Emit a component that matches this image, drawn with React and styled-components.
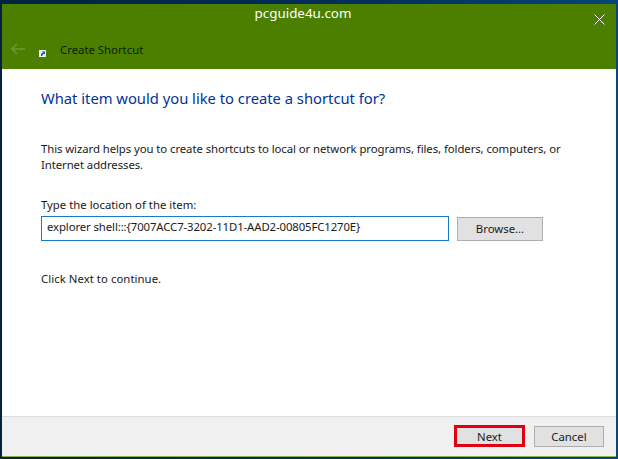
import React from 'react';
import styled, { createGlobalStyle } from 'styled-components';

const GlobalStyle = createGlobalStyle`
  html, body {
    margin: 0;
    padding: 0;
    background: #03254a;
  }
  * {
    box-sizing: border-box;
  }
`;

const Desktop = styled.div`
  width: 618px;
  height: 459px;
  padding: 4px 2px 2px 2px;
  background: linear-gradient(90deg, #04233f 0%, #03305c 60%, #06467a 100%);
  font-family: "Noto Sans", "Open Sans", sans-serif;
  font-size: 11.35px;
  color: #1a1a1a;
  overflow: hidden;
`;

const Wizard = styled.div`
  height: 100%;
  display: flex;
  flex-direction: column;
  background: #fff;
  border-bottom: 1px solid #8fb04e;
`;

const Header = styled.header`
  height: 65px;
  flex: none;
  background: #4c7f00;
  display: flex;
  flex-direction: column;
`;

const TitleBar = styled.div`
  position: relative;
  height: 32px;
  padding-right: 12px;
  text-align: center;
  color: #fff;
  font-size: 13.4px;
  line-height: 19px;
`;

const CloseIcon = styled.svg`
  position: absolute;
  top: 10px;
  right: 11px;
  width: 11px;
  height: 11px;
`;

const NavRow = styled.div`
  display: flex;
  align-items: center;
  height: 26px;
  padding-left: 9px;
`;

const BackIcon = styled.svg`
  width: 14px;
  height: 12px;
  flex: none;
`;

const ShortcutIcon = styled.svg`
  width: 7px;
  height: 7px;
  flex: none;
  margin: 8px 0 0 14px;
`;

const NavTitle = styled.span`
  margin-left: 14px;
  color: #0d1f00;
`;

const Body = styled.main`
  flex: 1;
  padding: 18px 39px 0;
`;

const Heading = styled.h1`
  margin: 0 0 32px;
  font-size: 14.75px;
  font-weight: 400;
  line-height: 22px;
  color: #003399;
`;

const Paragraph = styled.p`
  margin: 0 0 24px;
  width: 530px;
  line-height: 16px;
  letter-spacing: ${(p) => p.$spacing || 0}px;
`;

const FieldLabel = styled.label`
  display: block;
  margin-bottom: 3px;
  line-height: 16px;
`;

const FieldRow = styled.div`
  display: flex;
  align-items: center;
  gap: 8px;
  margin-bottom: 30px;
`;

const LocationInput = styled.div`
  width: 408px;
  height: 25px;
  padding-left: 5px;
  border: 1px solid #1979ca;
  line-height: 20px;
  letter-spacing: -0.1px;
  white-space: nowrap;
`;

const Button = styled.button`
  width: ${(p) => p.$width}px;
  height: ${(p) => p.$height}px;
  padding: 0;
  background: #e1e1e1;
  border: 1px solid #adadad;
  color: #1a1a1a;
  font-family: inherit;
  font-size: inherit;
`;

const Footer = styled.footer`
  height: 40px;
  flex: none;
  display: flex;
  align-items: center;
  justify-content: flex-end;
  gap: 9px;
  padding: 0 12px 1px 0;
  background: #f0f0f0;
  border-top: 1px solid #dfdfdf;
`;

const NextButton = styled(Button)`
  border: 3px solid #e00012;
`;

export default function App() {
  return (
    <>
      <GlobalStyle />
      <Desktop>
        <Wizard>
          <Header>
            <TitleBar>
              pcguide4u.com
              <CloseIcon viewBox="0 0 11 11">
                <path d="M0.5 0.5L10.5 10.5M10.5 0.5L0.5 10.5" stroke="#fff" strokeWidth="1" fill="none" />
              </CloseIcon>
            </TitleBar>
            <NavRow>
              <BackIcon viewBox="0 0 14 12">
                <path d="M1 6H14M6 1L1 6L6 11" stroke="#6d9635" strokeWidth="1.4" fill="none" />
              </BackIcon>
              <ShortcutIcon viewBox="0 0 7 7">
                <rect width="7" height="7" fill="#eef2f6" />
                <path d="M2 6L2 4L4 2.5L3 1.5H6V4.5L5 3.5L3.4 5V6Z" fill="#1c4f9c" />
              </ShortcutIcon>
              <NavTitle>Create Shortcut</NavTitle>
            </NavRow>
          </Header>
          <Body>
            <Heading>What item would you like to create a shortcut for?</Heading>
            <Paragraph $spacing={-0.07}>
              This wizard helps you to create shortcuts to local or network programs, files, folders, computers, or
              Internet addresses.
            </Paragraph>
            <FieldLabel>Type the location of the item:</FieldLabel>
            <FieldRow>
              <LocationInput>explorer shell:::{'{'}7007ACC7-3202-11D1-AAD2-00805FC1270E{'}'}</LocationInput>
              <Button $width={86} $height={24}>Browse...</Button>
            </FieldRow>
            <Paragraph $spacing={0.05}>Click Next to continue.</Paragraph>
          </Body>
          <Footer>
            <NextButton $width={71} $height={22}>Next</NextButton>
            <Button $width={70} $height={21}>Cancel</Button>
          </Footer>
        </Wizard>
      </Desktop>
    </>
  );
}
